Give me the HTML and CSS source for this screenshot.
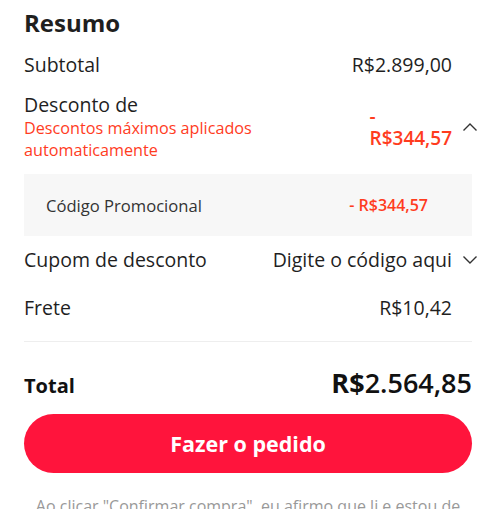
FILE: index.html
```html
<!DOCTYPE html>
<html lang="pt-BR">
<head>
<meta charset="utf-8">
<title>Resumo</title>
<link rel="stylesheet" href="styles.css">
</head>
<body>
<div class="summary">
  <h2 class="title">Resumo</h2>

  <div class="row">
    <span class="label">Subtotal</span>
    <span class="value">R$2.899,00</span>
    <span class="slot"></span>
  </div>

  <div class="row discount">
    <div class="label-col">
      <div class="label">Desconto de</div>
      <div class="hint">Descontos máximos aplicados automaticamente</div>
    </div>
    <span class="value red-value">- R$344,57</span>
    <span class="slot">
      <svg class="chev" width="16" height="10" viewBox="0 0 16 10"><path d="M1.5 8.5 L8 2 L14.5 8.5" fill="none" stroke="#333" stroke-width="1.4"/></svg>
    </span>
  </div>

  <div class="panel">
    <span class="panel-label">Código Promocional</span>
    <span class="panel-value">- R$344,57</span>
  </div>

  <div class="row">
    <span class="label">Cupom de desconto</span>
    <span class="value">Digite o código aqui</span>
    <span class="slot">
      <svg class="chev" width="16" height="10" viewBox="0 0 16 10"><path d="M1.5 1.5 L8 8 L14.5 1.5" fill="none" stroke="#333" stroke-width="1.4"/></svg>
    </span>
  </div>

  <div class="row">
    <span class="label">Frete</span>
    <span class="value">R$10,42</span>
    <span class="slot"></span>
  </div>

  <div class="divider"></div>

  <div class="total-row">
    <span class="total-label">Total</span>
    <span class="total-value"><b>R$</b>2.564,85</span>
  </div>

  <button class="order-btn">Fazer o pedido</button>

  <p class="note">Ao clicar "Confirmar compra", eu afirmo que li e estou de acordo com os termos de uso e a política de privacidade.</p>
</div>
</body>
</html>
```

FILE: styles.css
```css
* { box-sizing: border-box; }

html, body {
  margin: 0;
  padding: 0;
  background: #fff;
}

body {
  font-family: "Open Sans", "Noto Sans", sans-serif;
  color: #1f1f1f;
  overflow: hidden;
}

.summary {
  width: 448px;
  margin-left: 24px;
  padding-top: 7px;
}

.title {
  margin: 0 0 2px;
  font-size: 24px;
  line-height: 32px;
  font-weight: 700;
  color: #1f1f1f;
}

.row {
  display: flex;
  align-items: center;
  padding: 12px 0;
  font-size: 19.5px;
  line-height: 24px;
  color: #1f1f1f;
}

.label {
  flex: 1;
}

.value {
  text-align: left;
}

.slot {
  width: 20px;
  flex-shrink: 0;
  display: flex;
  align-items: center;
}

.chev {
  margin-left: 10px;
  display: block;
  flex-shrink: 0;
}

.discount {
  padding: 4px 0 13px;
}

.label-col {
  flex: 1;
}

.hint {
  color: #ff3c1e;
  font-size: 16.2px;
  line-height: 22px;
  width: 250px;
}

.red-value {
  color: #ff3c1e;
  font-weight: 600;
  font-size: 19px;
  width: min-content;
  line-height: 22px;
}

.panel {
  display: flex;
  justify-content: space-between;
  align-items: center;
  height: 62px;
  padding: 0 44px 0 22px;
  background: #f7f7f7;
}

.panel-label {
  color: #333;
  font-size: 16.6px;
}

.panel-value {
  color: #ff3c1e;
  font-weight: 600;
  font-size: 16px;
}

.divider {
  height: 1px;
  background: #eee;
  margin-top: 9px;
}

.total-row {
  display: flex;
  justify-content: space-between;
  align-items: baseline;
  padding-top: 22px;
  height: 72px;
}

.total-label {
  font-size: 20px;
  font-weight: 700;
  color: #111;
}

.total-value {
  font-size: 27px;
  font-weight: 600;
  color: #111;
}

.total-value b {
  font-weight: 700;
}

.order-btn {
  display: block;
  width: 100%;
  height: 59px;
  border: none;
  border-radius: 30px;
  background: #ff143c;
  color: #fff;
  font-family: "Open Sans", "Noto Sans", sans-serif;
  font-size: 21.5px;
  font-weight: 700;
}

.note {
  margin: 22px 0 0;
  text-align: center;
  color: #999;
  font-size: 16px;
  line-height: 22px;
}
```
